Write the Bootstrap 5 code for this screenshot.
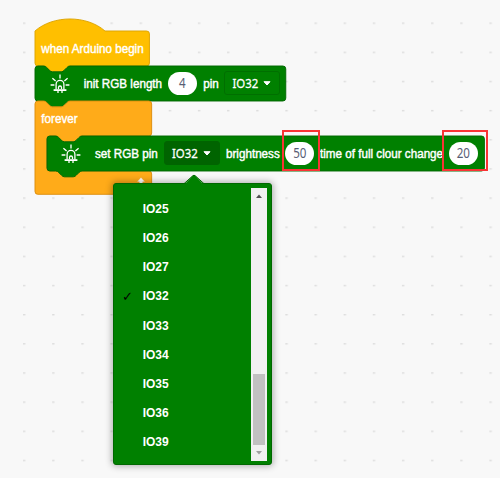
<!DOCTYPE html>
<html lang="en">
<head>
<meta charset="utf-8">
<meta name="viewport" content="width=device-width, initial-scale=1">
<title>Arduino blocks</title>
<link href="https://cdn.jsdelivr.net/npm/bootstrap@5.3.0/dist/css/bootstrap.min.css" rel="stylesheet">
<style>
body{background:#f8f8f8;font-family:"Liberation Sans",Arial,sans-serif;font-size:11.66px;line-height:15px;color:#fff}
.workspace{width:500px;height:478px;padding:30.5px 0 0 35.3px}
.grid-dots,.shape{overflow:visible;pointer-events:none}
.block{height:35px}
.block-text{-webkit-text-stroke:.4px #fff;white-space:nowrap}
.tall{display:inline-block;transform:scaleY(1.1)}
.shape path{stroke-width:1.3}
.shape .loop-arrow{stroke-width:.3}
.event-text{padding:0 0 0 6px}
.loop-text{padding:0 0 0 6px}
.nested{margin-left:11.7px}
.init-grid,.set-grid{display:grid;align-items:center;height:35px}
.init-grid{grid-template-columns:48.4px 84.3px 35.2px 21.3px 56px}
.set-grid{grid-template-columns:48px 69px 62px 59.5px 34.5px 129px 29px}
.oval{width:28.6px;height:23px;background:#fff;color:#575e75;font-family:"Noto Sans",sans-serif;font-size:11.6px}
.oval .tall,.pin-select .tall{transform:translateY(-.7px) scaleY(1.18)}
.pin-select{width:56px;height:24px;border:1px solid #006f00;border-radius:3px;padding:0 8px 0 7px;font-family:"Noto Sans",sans-serif;font-size:11.4px;-webkit-text-stroke:.25px #fff}
.pin-select.open{background:#006400;border-color:#006400}
.led{width:20px;height:20px;margin-left:14.3px;margin-top:1px}
.mark-box{border:2px solid #f93434;top:130px;height:40.5px}
.mark-brightness{left:281.5px;width:38.5px}
.mark-time{left:442px;width:46px;height:41px}
.pin-menu{left:113px;top:183px;width:158.5px;height:282px;background:#008000;border:1px solid #006800;border-radius:3px;box-shadow:0 0 7px 1px rgba(0,0,0,.32);padding:4px 3.5px 3px 0}
.menu-arrow{left:69px;top:-10px}
.pin-items{padding-top:7px;font-size:12px;font-weight:700}
.pin-item{height:29.13px}
.tick{width:28.7px;padding-left:8px;color:#000;font-family:"DejaVu Sans",sans-serif;font-weight:400;font-size:13px}
.bar{width:16px;background:#f1f1f1;padding:6px 0}
.thumb{width:12px;height:71px;background:#c1c1c1;margin-bottom:6px}
</style>
<script src="https://cdn.jsdelivr.net/npm/bootstrap@5.3.0/dist/js/bootstrap.bundle.min.js"></script>
</head>
<body class="overflow-hidden">
<svg width="0" height="0" class="position-absolute">
  <defs>
    <pattern id="dots" x="22" y="21.5" width="29.15" height="29.15" patternUnits="userSpaceOnUse"><path d="M1 1.7h2.4" stroke="#dcdcdc" stroke-width="1.4"/></pattern>
    <symbol id="led" viewBox="0 0 20 20"><g fill="none" stroke="#fff" stroke-width="1.3">
      <path d="M10 .6v4M2.400 4.200l3.200 2.800M17.600 4.200l-3.200 2.800M.6 11h3.800M15.600 11h3.800"/>
      <path d="M6.1 15.500v-5.200a3.900 3.900 0 0 1 7.800 0v5.200"/>
      <path d="M3.600 16.100h12.800" stroke-width="1.800"/><path d="M8 16v3M12 16v3"/>
      <path d="M8.500 15v-1.500a1.500 1.500 0 0 1 3 0V15"/></g></symbol>
    <symbol id="caret" viewBox="0 0 8 5"><path d="M1 .7h6L4 4z" fill="#fff" stroke="#fff" stroke-linejoin="round"/></symbol>
  </defs>
</svg>
<main class="workspace position-relative overflow-hidden">
  <svg class="grid-dots position-absolute top-0 start-0" width="500" height="478"><rect width="500" height="478" fill="url(#dots)"/></svg>

  <div class="block position-relative">
    <svg class="shape position-absolute top-0 start-0" width="1" height="1"><path transform="scale(.729)" fill="#ffbf00" stroke="#dda400" d="M0 0C25-22 71-22 96 0H153a4 4 0 0 1 4 4V44a4 4 0 0 1-4 4H48c-2 0-3 1-4 2l-4 4c-1 1-2 2-4 2H24c-2 0-3-1-4-2l-4-4c-1-1-2-2-4-2H4a4 4 0 0 1-4-4z"/></svg>
    <div class="block-text event-text position-relative h-100 d-flex align-items-center"><span class="tall">when Arduino begin</span></div>
  </div>

  <div class="block position-relative">
    <svg class="shape position-absolute top-0 start-0" width="1" height="1"><path transform="scale(.729)" fill="#008000" stroke="#006800" d="M0 4A4 4 0 0 1 4 0H12c2 0 3 1 4 2l4 4c1 1 2 2 4 2h12c2 0 3-1 4-2l4-4c1-1 2-2 4-2H340a4 4 0 0 1 4 4V44a4 4 0 0 1-4 4H48c-2 0-3 1-4 2l-4 4c-1 1-2 2-4 2H24c-2 0-3-1-4-2l-4-4c-1-1-2-2-4-2H4a4 4 0 0 1-4-4z"/></svg>
    <div class="init-grid position-relative">
      <svg class="led"><use href="#led"/></svg>
      <span class="block-text tall">init RGB length</span>
      <span class="oval rounded-pill d-flex align-items-center justify-content-center"><span class="tall">4</span></span>
      <span class="block-text tall">pin</span>
      <span class="pin-select d-flex align-items-center justify-content-between"><span class="tall">IO32</span> <svg width="8" height="5"><use href="#caret"/></svg></span>
    </div>
  </div>

  <div class="position-relative">
    <svg class="shape position-absolute top-0 start-0" width="1" height="1"><path transform="scale(.729)" fill="#ffab19" stroke="#dc8d0c" d="M0 4A4 4 0 0 1 4 0H12c2 0 3 1 4 2l4 4c1 1 2 2 4 2h12c2 0 3-1 4-2l4-4c1-1 2-2 4-2H156a4 4 0 0 1 4 4V44a4 4 0 0 1-4 4H64c-2 0-3 1-4 2l-4 4c-1 1-2 2-4 2H40c-2 0-3-1-4-2l-4-4c-1-1-2-2-4-2H20a4 4 0 0 0-4 4V92a4 4 0 0 0 4 4H156a4 4 0 0 1 4 4V124a4 4 0 0 1-4 4H4a4 4 0 0 1-4-4z"/><path class="loop-arrow" d="M106 76.500l4 4.300h-2.300v5h-3.400v-5h-2.300z" fill="#fff" stroke="#e5a03a"/></svg>
    <div class="block block-text loop-text position-relative d-flex align-items-center"><span class="tall">forever</span></div>
    <div class="block nested position-relative">
      <svg class="shape position-absolute top-0 start-0" width="1" height="1"><path transform="scale(.729)" fill="#008000" stroke="#006800" d="M0 4A4 4 0 0 1 4 0H12c2 0 3 1 4 2l4 4c1 1 2 2 4 2h12c2 0 3-1 4-2l4-4c1-1 2-2 4-2H596a4 4 0 0 1 4 4V44a4 4 0 0 1-4 4H48c-2 0-3 1-4 2l-4 4c-1 1-2 2-4 2H24c-2 0-3-1-4-2l-4-4c-1-1-2-2-4-2H4a4 4 0 0 1-4-4z"/></svg>
      <div class="set-grid position-relative">
        <svg class="led"><use href="#led"/></svg>
        <span class="block-text tall">set RGB pin</span>
        <span class="pin-select open d-flex align-items-center justify-content-between"><span class="tall">IO32</span> <svg width="8" height="5"><use href="#caret"/></svg></span>
        <span class="block-text tall">brightness</span>
        <span class="oval rounded-pill d-flex align-items-center justify-content-center"><span class="tall">50</span></span>
        <span class="block-text tall">time of full clour change</span>
        <span class="oval rounded-pill d-flex align-items-center justify-content-center"><span class="tall">20</span></span>
      </div>
    </div>
  </div>

  <div class="mark-box mark-brightness position-absolute"></div>
  <div class="mark-box mark-time position-absolute"></div>

  <div class="pin-menu position-absolute d-flex justify-content-between">
    <svg class="menu-arrow position-absolute" width="22" height="11"><path d="M1 11L9.500 2Q11 .4 12.500 2L21 11z" fill="#008000"/><path d="M1 9.700L9.500 2Q11 .4 12.500 2L21 9.700" fill="none" stroke="#006800"/></svg>
    <div class="pin-items">
      <div class="pin-item d-flex align-items-center"><span class="tick"></span>IO25</div>
      <div class="pin-item d-flex align-items-center"><span class="tick"></span>IO26</div>
      <div class="pin-item d-flex align-items-center"><span class="tick"></span>IO27</div>
      <div class="pin-item d-flex align-items-center"><span class="tick">✓</span>IO32</div>
      <div class="pin-item d-flex align-items-center"><span class="tick"></span>IO33</div>
      <div class="pin-item d-flex align-items-center"><span class="tick"></span>IO34</div>
      <div class="pin-item d-flex align-items-center"><span class="tick"></span>IO35</div>
      <div class="pin-item d-flex align-items-center"><span class="tick"></span>IO36</div>
      <div class="pin-item d-flex align-items-center"><span class="tick"></span>IO39</div>
    </div>
    <div class="bar d-flex flex-column align-items-center">
      <svg width="6" height="4"><path d="M0 4l3-3.500L6 4z" fill="#505050"/></svg>
      <div class="thumb mt-auto"></div>
      <svg width="6" height="4"><path d="M0 0h6L3 3.500z" fill="#a0a0a0"/></svg>
    </div>
  </div>
</main>
</body>
</html>
